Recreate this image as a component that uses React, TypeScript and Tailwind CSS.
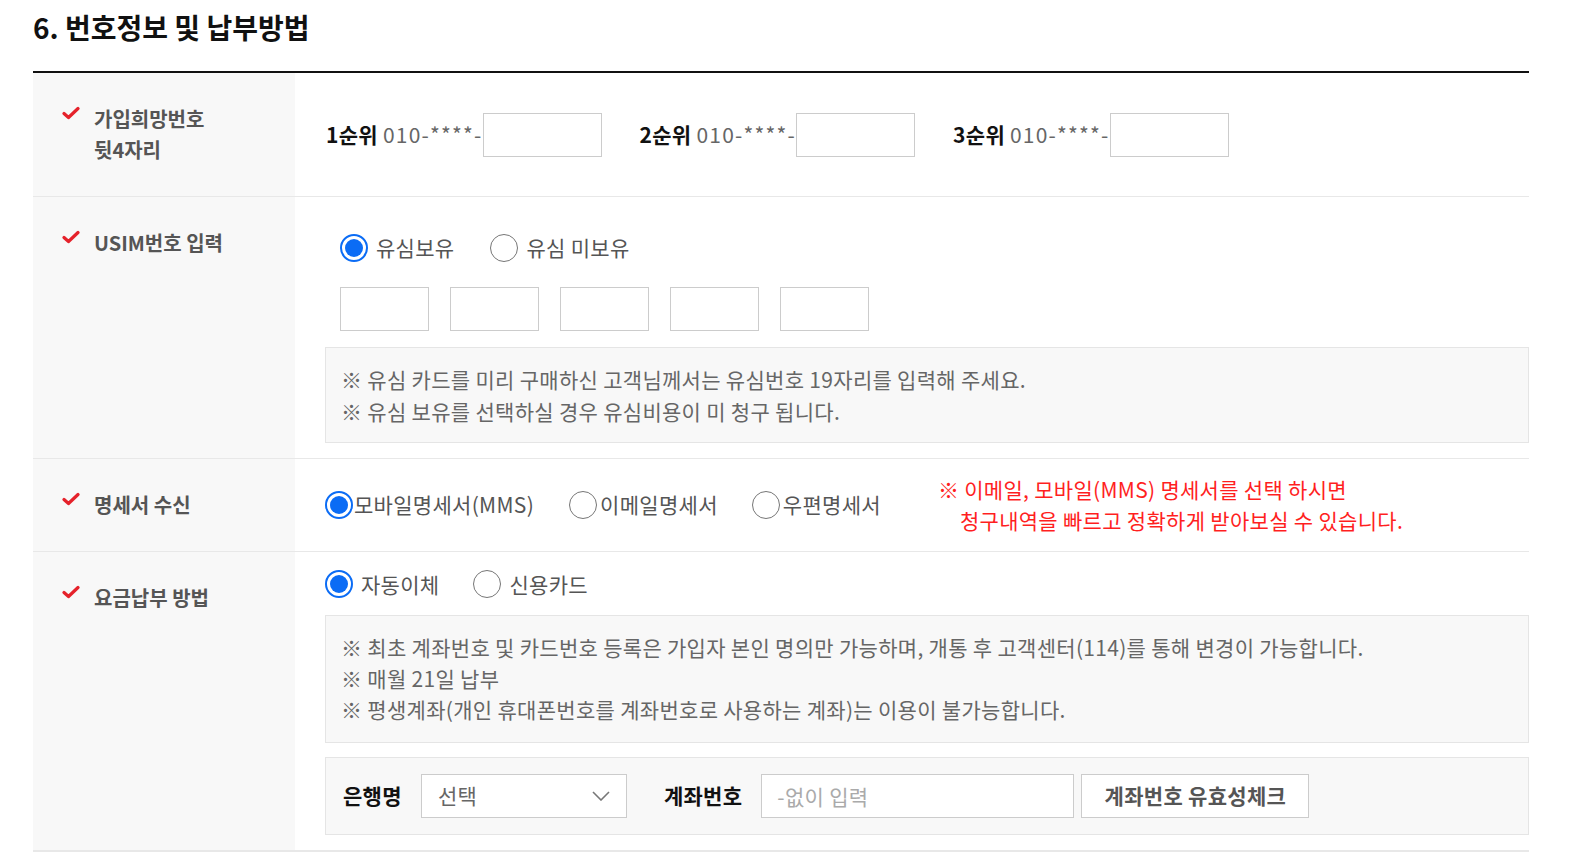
import React from "react";

const FONT = { fontFamily: '"Noto Sans CJK KR", "Noto Sans", sans-serif' };

function Check() {
  return (
    <svg width="18" height="14" viewBox="0 0 18 14" className="shrink-0">
      <path d="M2 7.5 L6.5 11.5 L16 2.5" fill="none" stroke="#e5222b" strokeWidth="3.2" strokeLinecap="round" strokeLinejoin="round" />
    </svg>
  );
}

function Radio({ checked }: { checked?: boolean }) {
  return checked ? (
    <span className="flex h-[28px] w-[28px] shrink-0 items-center justify-center rounded-full border-2 border-[#0b6cf5] bg-white">
      <span className="h-[18px] w-[18px] rounded-full bg-[#0b6cf5]" />
    </span>
  ) : (
    <span className="block h-[28px] w-[28px] shrink-0 rounded-full border border-[#767676] bg-white" />
  );
}

function Label({ children }: { children: React.ReactNode }) {
  return (
    <div className="flex bg-[#f8f8f8] pl-[29px] pt-[30px]">
      <div className="mt-[3px]">
        <Check />
      </div>
      <div className="ml-[14px] text-[20px] font-bold leading-[31px] text-[#555]">{children}</div>
    </div>
  );
}

function Rank({ n }: { n: string }) {
  return (
    <div className="flex items-center text-[21px] tracking-[0.3px]">
      <span className="font-bold text-[#111]">{n}순위</span>
      <span className="ml-[5px] tracking-[1.2px] text-[#666]">010-****-</span>
      <input className="h-[44px] w-[119px] border border-[#ccc] bg-white outline-none" />
    </div>
  );
}

export default function App() {
  return (
    <div className="min-h-[860px] bg-white" style={FONT}>
      <div className="ml-[33px] w-[1496px] pt-[8px]">
        <h2 className="text-[28px] font-bold leading-[38px] text-[#111]">6. 번호정보 및 납부방법</h2>
        <div className="mt-[25px] border-t-2 border-[#111]" />

        {/* Row 1 */}
        <div className="grid h-[124px] grid-cols-[262px_1fr] border-b border-[#e8e8e8]">
          <Label>
            가입희망번호
            <br />
            뒷4자리
          </Label>
          <div className="flex items-center gap-[38px] pl-[31px] pt-[1px]">
            <Rank n="1" />
            <Rank n="2" />
            <Rank n="3" />
          </div>
        </div>

        {/* Row 2 */}
        <div className="grid grid-cols-[262px_1fr] border-b border-[#e8e8e8]">
          <Label>USIM번호 입력</Label>
          <div className="pb-[15px] pl-[30px] pt-[35px]">
            <div className="flex items-center pl-[15px] text-[21px] tracking-[0.3px] text-[#555]">
              <Radio checked />
              <span className="ml-[8px]">유심보유</span>
              <span className="ml-[36px] flex">
                <Radio />
              </span>
              <span className="ml-[8px]">유심 미보유</span>
            </div>
            <div className="mt-[23px] flex gap-[21px] pl-[15px]">
              {[0, 1, 2, 3, 4].map((i) => (
                <input key={i} className="h-[44px] w-[89px] border border-[#ccc] bg-white outline-none" />
              ))}
            </div>
            <div className="mt-[16px] border border-[#e5e5e5] bg-[#f8f8f8] px-[15px] py-[15px] text-[21px] leading-[32px] tracking-[0.3px] text-[#666]">
              <p>※ 유심 카드를 미리 구매하신 고객님께서는 유심번호 19자리를 입력해 주세요.</p>
              <p>※ 유심 보유를 선택하실 경우 유심비용이 미 청구 됩니다.</p>
            </div>
          </div>
        </div>

        {/* Row 3 */}
        <div className="grid h-[93px] grid-cols-[262px_1fr] border-b border-[#e8e8e8]">
          <Label>명세서 수신</Label>
          <div className="flex items-center pl-[30px] text-[21px] tracking-[0.3px] text-[#555]">
            <Radio checked />
            <span className="ml-[1px]">모바일명세서(MMS)</span>
            <span className="ml-[35px] flex">
              <Radio />
            </span>
            <span className="ml-[3px]">이메일명세서</span>
            <span className="ml-[34px] flex">
              <Radio />
            </span>
            <span className="ml-[3px]">우편명세서</span>
            <div className="ml-[57px] leading-[31px] text-[#ff1f1f]">
              <p>※ 이메일, 모바일(MMS) 명세서를 선택 하시면</p>
              <p className="pl-[22px]">청구내역을 빠르고 정확하게 받아보실 수 있습니다.</p>
            </div>
          </div>
        </div>

        {/* Row 4 */}
        <div className="grid grid-cols-[262px_1fr] border-b-2 border-[#e8e8e8]">
          <Label>요금납부 방법</Label>
          <div className="pb-[15px] pl-[30px] pt-[17px]">
            <div className="flex items-center text-[21px] tracking-[0.3px] text-[#555]">
              <Radio checked />
              <span className="ml-[8px]">자동이체</span>
              <span className="ml-[34px] flex">
                <Radio />
              </span>
              <span className="ml-[8px]">신용카드</span>
            </div>
            <div className="mt-[15px] border border-[#e5e5e5] bg-[#f8f8f8] px-[15px] pb-[17px] pt-[16px] text-[21px] leading-[31px] tracking-[0.3px] text-[#666]">
              <p>※ 최초 계좌번호 및 카드번호 등록은 가입자 본인 명의만 가능하며, 개통 후 고객센터(114)를 통해 변경이 가능합니다.</p>
              <p>※ 매월 21일 납부</p>
              <p>※ 평생계좌(개인 휴대폰번호를 계좌번호로 사용하는 계좌)는 이용이 불가능합니다.</p>
            </div>
            <div className="mt-[14px] flex items-center border border-[#e5e5e5] bg-[#f8f8f8] py-[16px] pl-[17px] text-[21px] tracking-[0.3px]">
              <span className="font-bold text-[#111]">은행명</span>
              <div className="ml-[19px] flex h-[44px] w-[206px] items-center justify-between border border-[#ccc] bg-white pl-[16px] pr-[16px]">
                <span className="text-[#666]">선택</span>
                <svg width="18" height="10" viewBox="0 0 18 10">
                  <polyline points="1,1 9,9 17,1" fill="none" stroke="#777" strokeWidth="1.6" />
                </svg>
              </div>
              <span className="ml-[37px] font-bold text-[#111]">계좌번호</span>
              <input
                placeholder="-없이 입력"
                className="ml-[19px] h-[44px] w-[313px] border border-[#ccc] bg-white px-[15px] text-[#333] outline-none placeholder:text-[#aaa]"
              />
              <button className="ml-[7px] h-[44px] w-[228px] border border-[#ccc] bg-white font-bold text-[#555]">
                계좌번호 유효성체크
              </button>
            </div>
          </div>
        </div>
      </div>
    </div>
  );
}
